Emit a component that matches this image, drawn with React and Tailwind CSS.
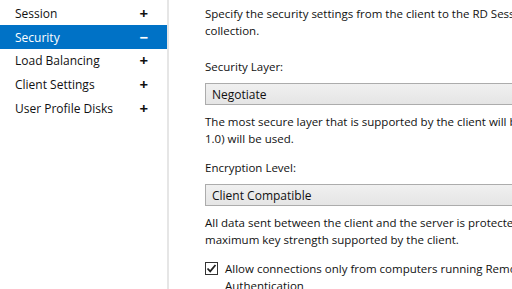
import React from 'react';

const sections = [
  { label: 'Session', open: false },
  { label: 'Security', open: true },
  { label: 'Load Balancing', open: false },
  { label: 'Client Settings', open: false },
  { label: 'User Profile Disks', open: false },
];

function Dropdown({ value }) {
  return (
    <div className="h-[22px] w-[360px] border border-[#acacac] bg-gradient-to-b from-[#f0f0f0] to-[#e5e5e5] pl-[6px] flex items-center text-[12px]">
      {value}
    </div>
  );
}

export default function App() {
  return (
    <div
      className="flex w-[512px] h-[289px] overflow-hidden bg-white text-[11.5px] leading-[17px] text-[#111]"
      style={{ fontFamily: '"Open Sans", "Noto Sans", sans-serif' }}
    >
      {/* Left nav */}
      <div className="w-[169px] shrink-0 border-r-2 border-[#e6e6e6] pt-[1.5px] text-[12px]">
        {sections.map((s) => (
          <div
            key={s.label}
            className={
              'h-[23.75px] w-[167px] flex items-center justify-between pl-[15px] pr-[19px] ' +
              (s.open ? 'bg-[#0072c6] text-white' : '')
            }
          >
            <span>{s.label}</span>
            <span className="text-[15px] font-bold leading-none">{s.open ? '−' : '+'}</span>
          </div>
        ))}
      </div>

      {/* Right panel */}
      <div className="flex-1 overflow-hidden pl-[36px] pt-[5px] whitespace-nowrap">
        <p>Specify the security settings from the client to the RD Session</p>
        <p>collection.</p>

        <p className="mt-[19px]">Security Layer:</p>
        <div className="mt-[8px]">
          <Dropdown value="Negotiate" />
        </div>
        <p className="mt-[8px]">The most secure layer that is supported by the client will be used.</p>
        <p>1.0) will be used.</p>

        <p className="mt-[12px]">Encryption Level:</p>
        <div className="mt-[8px]">
          <Dropdown value="Client Compatible" />
        </div>
        <p className="mt-[8px]">All data sent between the client and the server is protected by</p>
        <p>maximum key strength supported by the client.</p>

        <div className="mt-[12px] flex items-start gap-[7px]">
          <div className="mt-[2px] w-[13px] h-[13px] shrink-0 border border-[#333] bg-white flex items-center justify-center">
            <svg width="11" height="11" viewBox="0 0 11 11">
              <path d="M1.5 5.5 L4.2 8.3 L9.5 2" fill="none" stroke="#222" strokeWidth="1.8" />
            </svg>
          </div>
          <div>
            <p>Allow connections only from computers running Remote Desktop</p>
            <p>Authentication</p>
          </div>
        </div>
      </div>
    </div>
  );
}
